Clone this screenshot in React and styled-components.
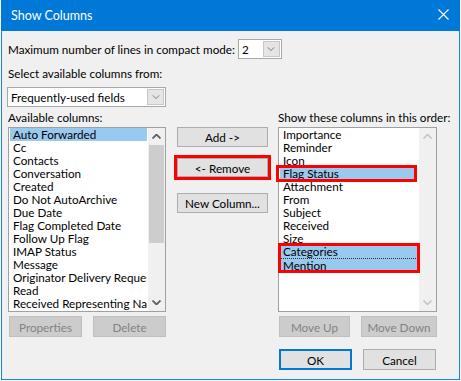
import styled, { createGlobalStyle } from "styled-components";

const GlobalStyle = createGlobalStyle`
  html, body {
    margin: 0;
    padding: 0;
    background: #f9f9f9;
  }
  body {
    font-family: Lato, "Noto Sans", sans-serif;
    font-size: 11.7px;
    color: #000;
  }
`;

const availableColumns = [
  "Auto Forwarded",
  "Cc",
  "Contacts",
  "Conversation",
  "Created",
  "Do Not AutoArchive",
  "Due Date",
  "Flag Completed Date",
  "Follow Up Flag",
  "IMAP Status",
  "Message",
  "Originator Delivery Requested",
  "Read",
  "Received Representing Name",
];

const shownColumns = [
  "Importance",
  "Reminder",
  "Icon",
  "Flag Status",
  "Attachment",
  "From",
  "Subject",
  "Received",
  "Size",
];

function Chevron({ up, color = "#606060", w = 9, h = 5, sw = 1.3 }) {
  return (
    <svg width={w} height={h} viewBox="0 0 9 5">
      <polyline
        points={up ? "0.5,4.5 4.5,0.5 8.5,4.5" : "0.5,0.5 4.5,4.5 8.5,0.5"}
        fill="none"
        stroke={color}
        strokeWidth={sw}
      />
    </svg>
  );
}

function ComboBox({ value, width }) {
  return (
    <Combo $width={width}>
      <span>{value}</span>
      <ComboButton>
        <Chevron w={8} h={4} sw={1} />
      </ComboButton>
    </Combo>
  );
}

function ScrollBar({ enabled }) {
  const c = enabled ? "#606060" : "#bfbfbf";
  return (
    <Scroll>
      <ScrollArrow>
        <Chevron up color={c} sw={enabled ? 1.8 : 1.4} />
      </ScrollArrow>
      <Track>{enabled && <Thumb />}</Track>
      <ScrollArrow>
        <Chevron color={c} sw={enabled ? 1.8 : 1.4} />
      </ScrollArrow>
    </Scroll>
  );
}

function App() {
  return (
    <>
      <GlobalStyle />
      <Window>
        <TitleBar>
          <span>Show Columns</span>
          <svg width="11" height="11" viewBox="0 0 11 11">
            <path d="M0.5 0.5 L10.5 10.5 M10.5 0.5 L0.5 10.5" stroke="#fff" strokeWidth="1.1" />
          </svg>
        </TitleBar>
        <Body>
          <InlineRow>
            <Label>Maximum number of lines in compact mode:</Label>
            <ComboBox value="2" width={44} />
          </InlineRow>
          <Label $top={6}>Select available columns from:</Label>
          <Spacer $h={6} />
          <ComboBox value="Frequently-used fields" width={159} />

          <Columns>
            <Label $top={2}>Available columns:</Label>
            <span />
            <Label $top={2}>Show these columns in this order:</Label>

            <ListBox>
              <Items>
                {availableColumns.map((c, i) => (
                  <Item key={c} $selected={i === 0}>
                    {c}
                  </Item>
                ))}
              </Items>
              <ScrollBar enabled />
            </ListBox>

            <MiddleButtons>
              <Button $w={91} $h={20}>Add -&gt;</Button>
              <Marked>
                <Button $w={91} $h={19}>&lt;- Remove</Button>
              </Marked>
              <Button $w={91} $h={20} $top={6}>New Column...</Button>
            </MiddleButtons>

            <ListBox $wide>
              <Items>
                {shownColumns.map((c) =>
                  c === "Flag Status" ? (
                    <MarkedRow key={c}>
                      <Item $selected>{c}</Item>
                    </MarkedRow>
                  ) : (
                    <Item key={c}>{c}</Item>
                  )
                )}
                <MarkedGroup>
                  <Item $selected>Categories</Item>
                  <Item $selected $focus>Mention</Item>
                </MarkedGroup>
              </Items>
              <ScrollBar />
            </ListBox>

            <ButtonRow $pad={1}>
              <Button $w={73} disabled>Properties</Button>
              <Button $w={73} disabled>Delete</Button>
            </ButtonRow>
            <span />
            <ButtonRow $pad={1}>
              <Button $w={73} disabled>Move Up</Button>
              <Button $w={78} disabled>Move Down</Button>
            </ButtonRow>

            <span />
            <span />
            <ButtonRow $pad={1} $top={10}>
              <Button $w={73} $default>OK</Button>
              <Button $w={73}>Cancel</Button>
            </ButtonRow>
          </Columns>
        </Body>
      </Window>
    </>
  );
}

export default App;

const Window = styled.div`
  margin-left: 1px;
  width: 459px;
  height: 380px;
  box-sizing: border-box;
  border: 1px solid #1883d7;
  border-top: none;
  background: #f0f0f0;
`;

const TitleBar = styled.div`
  height: 31px;
  margin: 0 -1px;
  background: #0078d7;
  color: #fff;
  display: flex;
  align-items: center;
  justify-content: space-between;
  padding: 0 10px 0 10px;
  font-size: 12.5px;

  span {
    margin-top: -1px;
  }
  svg {
    margin-right: 1px;
    margin-top: -2px;
  }
`;

const Body = styled.div`
  padding: 8px 0 0 6px;
`;

const InlineRow = styled.div`
  display: flex;
  align-items: center;
  gap: 3px;
`;

const Label = styled.div`
  margin-top: ${(p) => p.$top || 0}px;
  height: 16px;
  line-height: 16px;
  white-space: nowrap;
`;

const Spacer = styled.div`
  height: ${(p) => p.$h}px;
`;

const Combo = styled.div`
  width: ${(p) => p.$width}px;
  height: 20px;
  box-sizing: border-box;
  border: 1px solid #a8a8a8;
  background: #fff;
  display: flex;
  align-items: center;
  justify-content: space-between;
  margin-left: ${(p) => (p.$width > 100 ? -1 : 0)}px;

  span {
    padding-left: 3px;
    line-height: 16px;
  }
`;

const ComboButton = styled.div`
  width: 17px;
  height: 16px;
  margin-right: 1px;
  box-sizing: border-box;
  background: #e5e5e5;
  border: 1px solid #c6c6c6;
  display: flex;
  align-items: center;
  justify-content: center;
`;

const Columns = styled.div`
  display: grid;
  grid-template-columns: 169px 101px 159px;
  row-gap: 2px;
  align-items: start;
`;

const ListBox = styled.div`
  width: ${(p) => (p.$wide ? 159 : 158)}px;
  height: 185px;
  box-sizing: border-box;
  border: 1px solid #a0a0a0;
  background: #fff;
  display: flex;
  justify-content: space-between;
`;

const Items = styled.div`
  flex: 1;
  min-width: 0;
  padding: 0 1px;
`;

const Item = styled.div`
  height: 13px;
  line-height: ${(p) => (p.$focus ? 12 : 13)}px;
  padding-left: 3px;
  white-space: nowrap;
  overflow-x: clip;
  box-sizing: border-box;
  background: ${(p) => (p.$selected ? "#99c9ef" : "transparent")};
  border-top: ${(p) => (p.$focus ? "1px dotted #333" : "none")};
`;

const MarkedRow = styled.div`
  outline: 3px solid #ff0000;
  outline-offset: -1px;
  margin-right: 3px;
  margin-left: -2px;
  padding-left: 2px;
  position: relative;
`;

const MarkedGroup = styled.div`
  outline: 3px solid #ff0000;
  outline-offset: -1px;
  position: relative;
`;

const Scroll = styled.div`
  width: 17px;
  flex: none;
  display: flex;
  flex-direction: column;
  background: #f0f0f0;
`;

const ScrollArrow = styled.div`
  height: 17px;
  display: flex;
  align-items: center;
  justify-content: center;
`;

const Track = styled.div`
  flex: 1;
`;

const Thumb = styled.div`
  margin: 0 1px;
  height: 98px;
  background: #cdcdcd;
`;

const MiddleButtons = styled.div`
  display: flex;
  flex-direction: column;
  gap: 10px;
`;

const Marked = styled.div`
  width: 91px;
  outline: 3px solid #ff0000;
  margin-top: 1px;
`;

const ButtonRow = styled.div`
  display: flex;
  gap: 11px;
  padding-left: ${(p) => p.$pad || 0}px;
  margin-top: ${(p) => p.$top || 2}px;
`;

const Button = styled.button`
  width: ${(p) => p.$w}px;
  height: ${(p) => p.$h || 21}px;
  margin-top: ${(p) => p.$top || 0}px;
  box-sizing: border-box;
  padding: 0;
  font-family: inherit;
  font-size: 11.7px;
  color: #000;
  background: #e1e1e1;
  border: 1px solid ${(p) => (p.$default ? "#0078d7" : "#adadad")};
  box-shadow: ${(p) => (p.$default ? "inset 0 0 0 1px #0078d7" : "none")};
  border-radius: 0;

  &:disabled {
    background: #cccccc;
    border-color: #bfbfbf;
    color: #838383;
  }
`;
